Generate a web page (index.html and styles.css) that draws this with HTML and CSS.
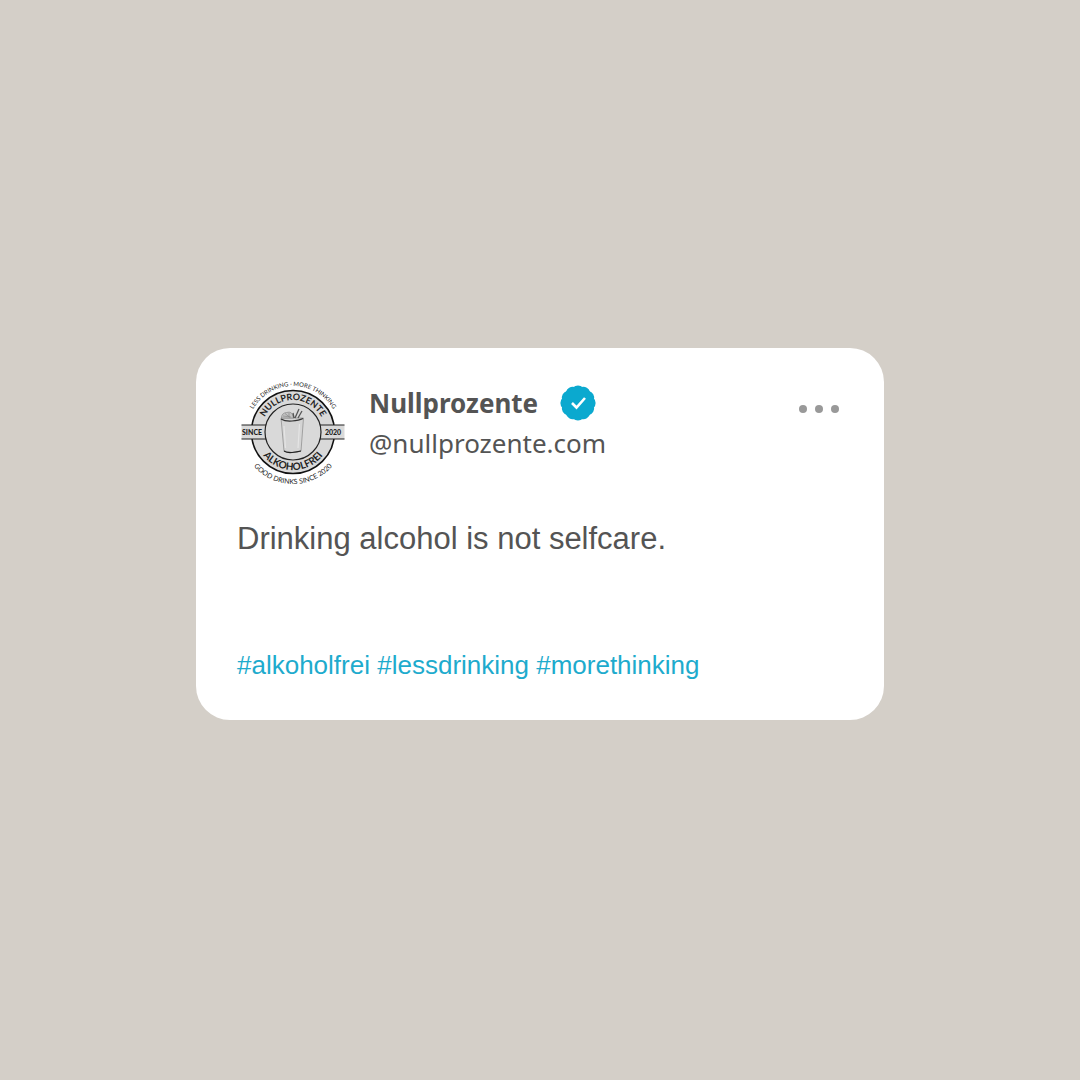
FILE: index.html
```html
<!DOCTYPE html>
<html lang="en">
<head>
    <meta charset="UTF-8">
    <meta name="viewport" content="width=device-width, initial-scale=1.0">
    <title>Nullprozente</title>
    <link rel="stylesheet" href="styles.css">
</head>
<body>
    <article class="card">
        <header class="header">
            <svg class="logo" viewBox="0 0 112 112" role="img" aria-label="Nullprozente Alkoholfrei">
                <defs>
                    <path id="arc-top-outer" d="M10 56 A46 46 0 0 1 102 56"/>
                    <path id="arc-top-inner" d="M24 56 A32 32 0 0 1 88 56"/>
                    <path id="arc-bottom-inner" d="M18 56 A38 38 0 0 0 94 56"/>
                    <path id="arc-bottom-outer" d="M4 56 A52 52 0 0 0 108 56"/>
                </defs>

                <!-- rings and band -->
                <circle cx="56" cy="56" r="41.5" fill="#d9d9d9" stroke="#111" stroke-width="1.6"/>
                <rect x="4.5" y="49" width="103" height="14" fill="#d9d9d9"/>
                <path d="M4.5 49h103M4.5 63h103" stroke="#222" stroke-width="1.2"/>
                <circle cx="56" cy="56" r="28" fill="#d9d9d9" stroke="#222" stroke-width="1.2"/>

                <!-- glass -->
                <path d="M44 42l3 33q8 3 17 0l2.500-33z" fill="#d4d4d4" stroke="#888" stroke-width=".7"/>
                <path d="M47 50l1.500 22M62.500 48l-1.500 24" stroke="#e4e4e4" stroke-width="1.2"/>
                <path d="M47 75q3 2 8 1.500t9-1.500" fill="none" stroke="#222" stroke-width="1.1"/>
                <path d="M44 43q4 2.500 11 2t11-2.500" fill="none" stroke="#333" stroke-width="1.1"/>
                <path d="M44.500 42q0-5 5-5.500 6-2 7 5.500zM46 40l8 1M48 37.500l5 4M52 37v4" fill="#c2c2c2" stroke="#888" stroke-width=".7"/>
                <path d="M56 37l1 5M58 42l4-9M61 42l4-7" stroke="#555" stroke-width="1.3"/>

                <text class="logo-small"><textPath href="#arc-top-outer" startOffset="50%">LESS DRINKING · MORE THINKING</textPath></text>
                <text class="logo-big"><textPath href="#arc-top-inner" startOffset="50%">NULLPROZENTE</textPath></text>
                <text class="logo-big logo-bottom"><textPath href="#arc-bottom-inner" startOffset="50%">ALKOHOLFREI</textPath></text>
                <text class="logo-small logo-since"><textPath href="#arc-bottom-outer" startOffset="50%">GOOD DRINKS SINCE 2020</textPath></text>
                <text class="logo-band" x="15" y="58.5">SINCE</text>
                <text class="logo-band" x="96" y="58.5">2020</text>
            </svg>

            <div class="author">
                <div class="name-row">
                    <h1 class="name">Nullprozente</h1>
                    <svg class="badge" viewBox="0 0 36 36" role="img" aria-label="Verified">
                        <g fill="#0ba9cf">
                            <rect x="3.5" y="3.5" width="29" height="29" rx="7" transform="rotate(15 18 18)"/>
                            <rect x="3.5" y="3.5" width="29" height="29" rx="7" transform="rotate(45 18 18)"/>
                            <rect x="3.5" y="3.5" width="29" height="29" rx="7" transform="rotate(75 18 18)"/>
                        </g>
                        <path d="M12 18l4.500 4.500L25 13" fill="none" stroke="#fff" stroke-width="2.6"/>
                    </svg>
                </div>
                <p class="handle">@nullprozente.com</p>
            </div>

            <button class="more" type="button" aria-label="More">
                <span class="dot"></span>
                <span class="dot"></span>
                <span class="dot"></span>
            </button>
        </header>

        <p class="text">Drinking alcohol is not selfcare.</p>

        <p class="tags">
            <a href="#alkoholfrei">#alkoholfrei</a>
            <a href="#lessdrinking">#lessdrinking</a>
            <a href="#morethinking">#morethinking</a>
        </p>
    </article>
</body>
</html>
```
FILE: styles.css
```css
* {
    box-sizing: border-box;
}

body {
    margin: 0;
    padding: 0 24px 12px;
    display: flex;
    justify-content: center;
    align-items: center;
    min-height: 100vh;
    background-color: #d4cfc8;
    font-family: 'Liberation Sans', Arial, sans-serif;
    color: #545454;
}

.card {
    width: 100%;
    max-width: 688px;
    padding: 28px 41px 39px;
    background-color: #fff;
    border-radius: 34px;
}

.header {
    display: flex;
    align-items: flex-start;
    gap: 20px;
}

.logo {
    flex: none;
    width: 112px;
    height: 112px;
}

/* logo lettering */
.logo text {
    font-family: Lato, sans-serif;
    text-anchor: middle;
    fill: #222;
}

.logo-small {
    font-size: 6px;
}

.logo-since {
    font-size: 7px;
}

.logo-big {
    font-size: 9px;
    font-weight: 700;
}

.logo-bottom {
    font-size: 10px;
}

.logo-band {
    font-size: 7px;
    font-weight: 900;
}

.author {
    flex: 1;
    padding-top: 7px;
    font-family: 'Noto Sans', 'Open Sans', sans-serif;
    font-size: 26px;
    line-height: 40px;
}

.name-row {
    display: flex;
    align-items: center;
    gap: 22px;
}

.name {
    margin: 0;
    font-size: 26px;
    font-weight: 700;
}

.badge {
    width: 36px;
    height: 36px;
}

.handle {
    margin: 0;
}

.more {
    display: flex;
    gap: 8px;
    margin-top: 25px;
    padding: 4px;
    border: 0;
    background: none;
    cursor: pointer;
}

.dot {
    width: 8px;
    height: 8px;
    border-radius: 50%;
    background-color: #999;
}

.text {
    margin: 31px 0 90px;
    font-size: 31px;
    line-height: 40px;
}

.tags {
    margin: 0;
    font-size: 26px;
    line-height: 32px;
}

.tags a {
    color: #1eabcd;
    text-decoration: none;
}
```
